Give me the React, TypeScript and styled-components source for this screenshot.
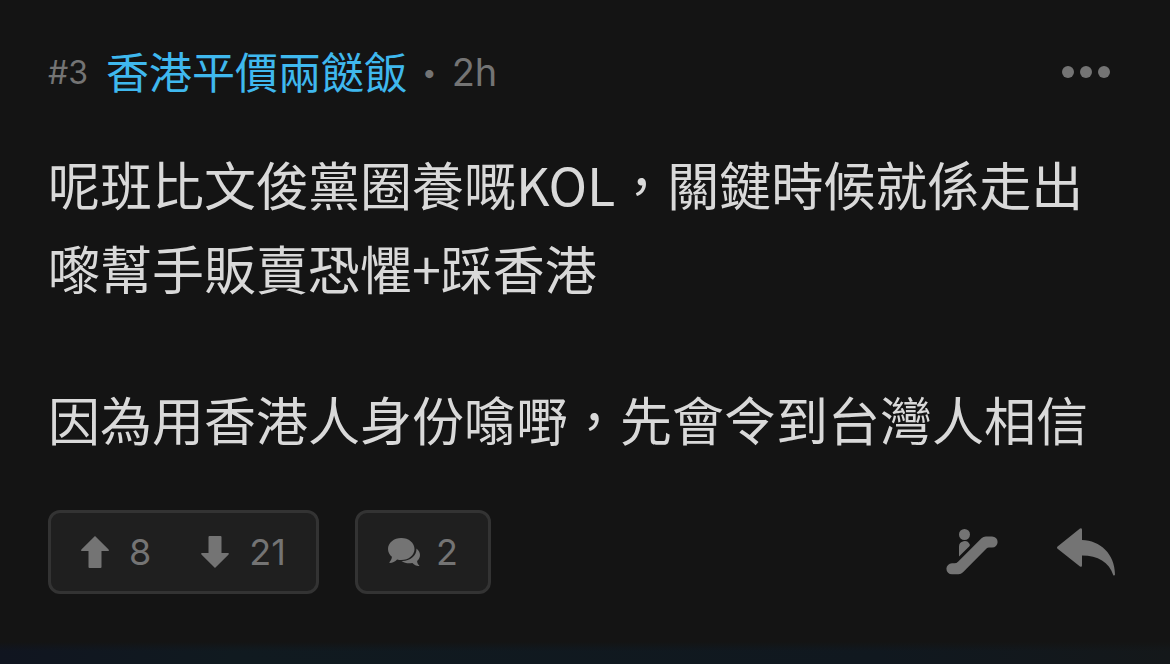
import React from "react";
import styled, { createGlobalStyle } from "styled-components";

const GlobalStyle = createGlobalStyle`
  *, *::before, *::after { box-sizing: border-box; }
  body {
    margin: 0;
    background: #141414;
    color: #d9d9d9;
    font-family: Inter, "Noto Sans CJK TC", sans-serif;
  }
  button {
    display: flex;
    align-items: center;
    margin: 0;
    padding: 0;
    border: 0;
    background: none;
    color: inherit;
    font: inherit;
    cursor: pointer;
  }
  svg { display: block; fill: currentColor; }
`;

const Page = styled.main`
  display: flex;
  flex-direction: column;
  min-height: 100vh;
`;

const Comment = styled.article`
  flex: 1;
  padding: 44px 48px 48px;
`;

const Header = styled.header`
  display: flex;
  align-items: center;
  height: 56px;
  color: #747474;
`;

const FloorNumber = styled.span`
  margin-right: 18px;
  font-size: 32px;
`;

const Author = styled.a`
  padding-bottom: 4px;
  color: #3fb8ee;
  font-family: "Noto Sans CJK TC", sans-serif;
  font-size: 43px;
  line-height: 56px;
  text-decoration: none;
`;

const Dot = styled.span`
  margin: 0 15px;
  font-size: 26px;
`;

const Age = styled.time`
  font-size: 38px;
`;

const MoreButton = styled.button`
  margin-left: auto;
  padding: 12px;
`;

const Body = styled.div`
  margin-top: 42px;
  font-family: "Noto Sans CJK TC", sans-serif;
  font-size: 52px;
  line-height: 84px;
`;

const Paragraph = styled.p`
  margin: 0;
  & + & { margin-top: 67px; }
`;

const Footer = styled.footer`
  display: flex;
  align-items: center;
  gap: 36px;
  margin-top: 49px;
  color: #747474;
`;

const Pill = styled.div`
  display: flex;
  align-items: center;
  gap: 50px;
  height: 84px;
  padding: 0 30px;
  border: 3px solid #333;
  border-radius: 12px;
  background: #1f1f1f;
`;

const CountButton = styled.button<{ $gap: number }>`
  gap: ${({ $gap }) => $gap}px;
  font-size: 36px;
`;

const Actions = styled.div`
  display: flex;
  align-items: center;
  gap: 59px;
  margin-left: auto;
  padding-right: 7px;
`;

const NextStrip = styled.div`
  height: 22px;
  background:
    linear-gradient(#141414, transparent 40%),
    linear-gradient(90deg, #101520, #101a20 20%, #10181f 75%, #14181a);
`;

const UpIcon = () => (
  <svg width="28" height="32" viewBox="0 0 28 32" aria-hidden="true">
    <path d="M14 0 27.6 13.6Q28.4 15 27 15H20.500V31Q20.500 32 19.500 32H8.500Q7.500 32 7.500 31V15H1Q-.4 15 .4 13.600Z" />
  </svg>
);

const DownIcon = () => (
  <svg width="28" height="32" viewBox="0 0 28 32" aria-hidden="true">
    <path d="M14 32 27.600 18.400Q28.400 17 27 17H20.500V1Q20.500 0 19.500 0H8.500Q7.500 0 7.500 1V17H1Q-.4 17 .4 18.400Z" />
  </svg>
);

const ChatIcon = () => (
  <svg width="32" height="28" viewBox="0 0 32 28" aria-hidden="true">
    <path d="M13.300 0C20.700 0 26.500 4.800 26.500 11S20.700 22 13.300 22C11.800 22 10.400 21.800 9.100 21.400C7 23.500 4.500 24.800 1.800 24.900C1.300 24.900 1.200 24.400 1.600 24C3 22.500 3.800 20.800 3.900 18.800C1.500 16.800 0 14.100 0 11C0 4.800 5.900 0 13.300 0Z" />
    <path d="M28.500 10.500C30.700 12.200 32 14.500 32 17C32 19.300 30.900 21.400 29.100 22.900C29.200 24.700 29.900 26.100 31.100 27.200C31.500 27.600 31.300 28 30.800 28C28.300 27.900 26.200 26.800 24.400 25C20.500 25.900 16.400 25.100 13.500 22.900C21 23.500 28.700 18.500 28.500 10.500Z" />
  </svg>
);

const EscalatorIcon = () => (
  <svg width="52" height="46" viewBox="0 0 52 46" aria-hidden="true">
    <circle cx="18.500" cy="5.500" r="5.500" />
    <path d="M13 27.500V17.500A5.600 5.600 0 0 1 23.700 15.300Q24.200 16.500 23.400 17.200Z" />
    <path d="M5.900 34.300H8.500Q10.500 34.300 12 32.800L35.500 9.300Q37.300 7.500 39.800 7.500H46.100A5.500 5.500 0 0 1 46.100 18.500H43Q41.500 18.500 40.500 19.500L17 43.200Q15 45.300 12.500 45.300H5.900A5.500 5.500 0 0 1 5.900 34.300Z" />
  </svg>
);

const ReplyIcon = () => (
  <svg width="58" height="48" viewBox="0 0 58 48" aria-hidden="true">
    <path d="M.6 18.600 23 .6Q25 -.6 25 1.800V12C43 12.500 58 26 58 46.500Q57.600 48 56.300 47.200C52 34 41 27.500 25 27.500V37.200Q25 39.600 23 38.400L.6 20.800Q-.6 19.700 .6 18.600Z" />
  </svg>
);

export default function App() {
  return (
    <>
      <GlobalStyle />
      <Page>
        <Comment lang="zh-HK">
          <Header>
            <FloorNumber>#3</FloorNumber>
            <Author href="#author">香港平價兩餸飯</Author>
            <Dot>•</Dot>
            <Age>2h</Age>
            <MoreButton aria-label="More">
              <svg width="48" height="12" viewBox="0 0 48 12" aria-hidden="true">
                <circle cx="6" cy="6" r="6" />
                <circle cx="24" cy="6" r="6" />
                <circle cx="42" cy="6" r="6" />
              </svg>
            </MoreButton>
          </Header>
          <Body>
            <Paragraph>呢班比文俊黨圈養嘅KOL，關鍵時候就係走出嚟幫手販賣恐懼+踩香港</Paragraph>
            <Paragraph>因為用香港人身份噏嘢，先會令到台灣人相信</Paragraph>
          </Body>
          <Footer>
            <Pill>
              <CountButton $gap={20} aria-label="Upvote, 8"><UpIcon />8</CountButton>
              <CountButton $gap={20} aria-label="Downvote, 21"><DownIcon />21</CountButton>
            </Pill>
            <Pill>
              <CountButton $gap={16} aria-label="Replies, 2"><ChatIcon />2</CountButton>
            </Pill>
            <Actions>
              <button aria-label="Follow thread"><EscalatorIcon /></button>
              <button aria-label="Reply"><ReplyIcon /></button>
            </Actions>
          </Footer>
        </Comment>
        <NextStrip />
      </Page>
    </>
  );
}
